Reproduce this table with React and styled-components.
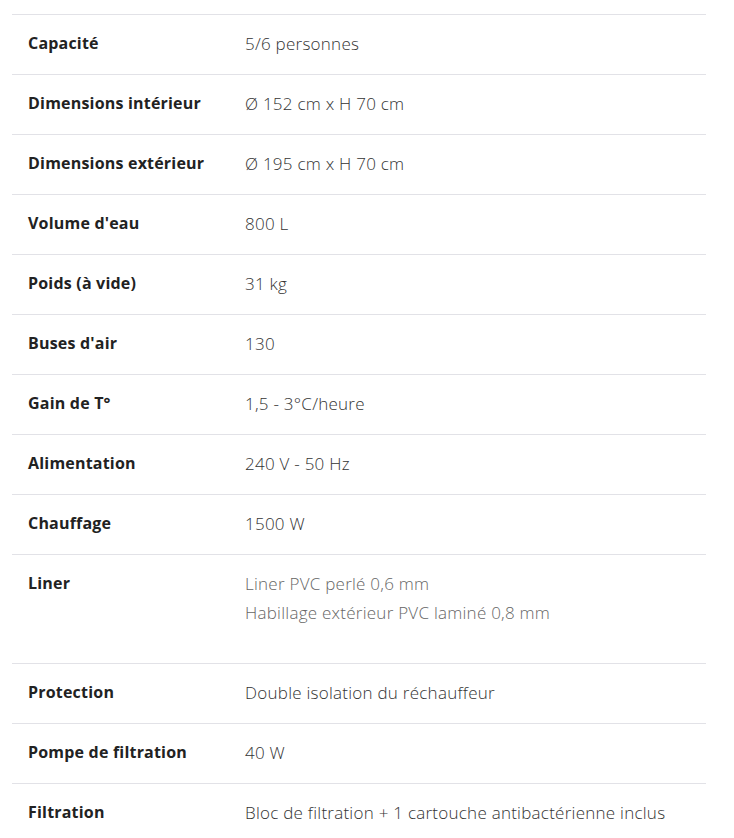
import React from 'react';
import styled, { createGlobalStyle } from 'styled-components';

const GlobalStyle = createGlobalStyle`
    body {
        margin: 0;
        background: #fff;
        font-family: "Open Sans", Lato, sans-serif;
    }
`;

const Wrapper = styled.div`
    padding: 14px 28px 0 12px;
`;

const SpecTable = styled.table`
    width: 694px;
    border-collapse: collapse;
    font-size: 16px;
`;

const Row = styled.tr`
    border-top: 1px solid #e2e2e7;
`;

const Label = styled.th`
    width: 185px;
    padding: 14px 16px 16px;
    text-align: left;
    vertical-align: top;
    font-weight: 700;
    line-height: 29px;
    color: #222;
    letter-spacing: 0.2px;
`;

const Value = styled.td`
    padding: 14px 16px 16px;
    vertical-align: top;
    font-size: 17px;
    font-weight: 300;
    line-height: 29px;
    letter-spacing: 0.25px;
    color: #333;
`;

const Paragraph = styled.p`
    margin: 0 0 20px;
    color: #666;
`;

const specs = [
    ['Capacité', '5/6 personnes'],
    ['Dimensions intérieur', 'Ø 152 cm x H 70 cm'],
    ['Dimensions extérieur', 'Ø 195 cm x H 70 cm'],
    ["Volume d'eau", '800 L'],
    ['Poids (à vide)', '31 kg'],
    ["Buses d'air", '130'],
    ['Gain de T°', '1,5 - 3°C/heure'],
    ['Alimentation', '240 V - 50 Hz'],
    ['Chauffage', '1500 W'],
    ['Liner', ['Liner PVC perlé 0,6 mm', 'Habillage extérieur PVC laminé 0,8 mm']],
    ['Protection', 'Double isolation du réchauffeur'],
    ['Pompe de filtration', '40 W'],
    ['Filtration', 'Bloc de filtration + 1 cartouche antibactérienne inclus'],
];

const App = () => (
    <>
        <GlobalStyle />
        <Wrapper>
            <SpecTable>
                <tbody>
                    {specs.map(([label, value]) => (
                        <Row key={label}>
                            <Label>{label}</Label>
                            <Value>
                                {Array.isArray(value) ? (
                                    <Paragraph>
                                        {value[0]}
                                        <br />
                                        {value[1]}
                                    </Paragraph>
                                ) : (
                                    value
                                )}
                            </Value>
                        </Row>
                    ))}
                </tbody>
            </SpecTable>
        </Wrapper>
    </>
);

export default App;
